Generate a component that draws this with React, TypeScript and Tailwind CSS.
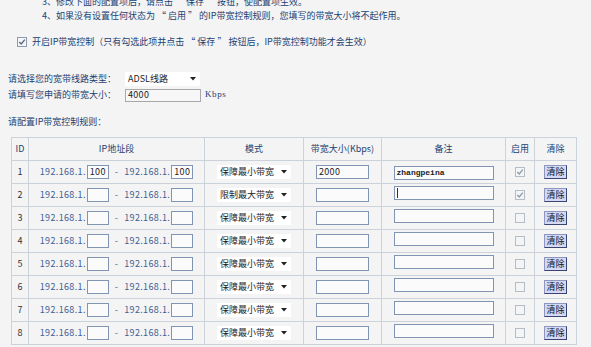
import React from "react";

type Row = {
  id: number;
  a: string;
  b: string;
  mode: string;
  bw: string;
  note: string;
  on: boolean;
  caret?: boolean;
};

const rows: Row[] = [
  { id: 1, a: "100", b: "100", mode: "保障最小带宽", bw: "2000", note: "zhangpeina", on: true },
  { id: 2, a: "", b: "", mode: "限制最大带宽", bw: "", note: "", on: true, caret: true },
  { id: 3, a: "", b: "", mode: "保障最小带宽", bw: "", note: "", on: false },
  { id: 4, a: "", b: "", mode: "保障最小带宽", bw: "", note: "", on: false },
  { id: 5, a: "", b: "", mode: "保障最小带宽", bw: "", note: "", on: false },
  { id: 6, a: "", b: "", mode: "保障最小带宽", bw: "", note: "", on: false },
  { id: 7, a: "", b: "", mode: "保障最小带宽", bw: "", note: "", on: false },
  { id: 8, a: "", b: "", mode: "保障最小带宽", bw: "", note: "", on: false },
];

function Check({ checked, dark }: { checked: boolean; dark?: boolean }) {
  return (
    <span
      className={
        "inline-flex w-[10px] h-[10px] items-center justify-center border bg-[#f3f5f7] " +
        (dark ? "border-[#8e9aab]" : "border-[#b4bcc6]")
      }
    >
      {checked && (
        <svg width="8" height="8" viewBox="0 0 8 8">
          <path
            d="M1.3 4 L3.2 6 L6.8 1.6"
            fill="none"
            stroke={dark ? "#56657c" : "#8e99a8"}
            strokeWidth="1.3"
          />
        </svg>
      )}
    </span>
  );
}

function Arrow() {
  return (
    <svg width="6" height="4" viewBox="0 0 6 4">
      <path d="M0 0 H6 L3 3.5 Z" fill="#222" />
    </svg>
  );
}

function Select({ text, w }: { text: string; w: string }) {
  return (
    <div
      className={
        "inline-flex h-[14px] items-center justify-between bg-white pl-[3px] pr-[4px] text-[#1c1c1c] " + w
      }
    >
      <span>{text}</span>
      <Arrow />
    </div>
  );
}

function Box({ value, w, mono }: { value: string; w: string; mono?: boolean }) {
  return (
    <div
      className={
        "inline-flex h-[14px] items-center border border-[#7f95b3] bg-[#fbfbfb] pl-[2px] text-[#1c1c1c] " +
        w +
        (mono ? " font-['Liberation_Mono',monospace] text-[8px] font-bold" : "")
      }
    >
      {value}
    </div>
  );
}

export default function App() {
  return (
    <div className="w-[591px] h-[347px] overflow-hidden bg-[#f4f4f4] font-['Noto_Sans_CJK_SC',sans-serif] text-[9px] text-[#223f72]">
      <div className="-mt-[5px] pl-[42px] leading-[14px]">
        <div>3、修改下面的配置项后，请点击 “ 保存 ” 按钮，使配置项生效。</div>
        <div>4、如果没有设置任何状态为 “ 启用 ” 的IP带宽控制规则，您填写的带宽大小将不起作用。</div>
      </div>

      <div className="mt-[12px] flex h-[14px] items-center pl-[17px]">
        <Check checked dark />
        <span className="ml-[5px]">开启IP带宽控制（只有勾选此项并点击 “ 保存 ” 按钮后，IP带宽控制功能才会生效）</span>
      </div>

      <div className="mt-[23px] flex h-[14px] items-center pl-[8px]">
        <span className="w-[117px]">请选择您的宽带线路类型：</span>
        <Select text="ADSL线路" w="w-[75px]" />
      </div>
      <div className="mt-[2px] flex h-[14px] items-center pl-[8px]">
        <span className="w-[117px]">请填写您申请的带宽大小：</span>
        <div className="inline-flex h-[13px] w-[76px] items-center border border-[#a9a9a9] bg-[#f7f7f7] pl-[2px] text-[#1c1c1c] tracking-[0.3px]">
          4000
        </div>
        <span className="ml-[4px] font-['Liberation_Serif',serif] text-[9px] tracking-[0.6px]">Kbps</span>
      </div>

      <div className="mt-[13px] h-[14px] pl-[8px] leading-[14px]">请配置IP带宽控制规则：</div>

      <table className="ml-[11px] mt-[8px] table-fixed border-collapse w-[565px]">
        <colgroup>
          <col className="w-[17px]" />
          <col className="w-[176px]" />
          <col className="w-[99px]" />
          <col className="w-[78px]" />
          <col className="w-[124px]" />
          <col className="w-[29px]" />
          <col className="w-[42px]" />
        </colgroup>
        <thead>
          <tr className="h-[23px]">
            <th className="border border-[#cbd2da] font-normal">ID</th>
            <th className="border border-[#cbd2da] font-normal">IP地址段</th>
            <th className="border border-[#cbd2da] font-normal">模式</th>
            <th className="border border-[#cbd2da] font-normal">带宽大小(Kbps)</th>
            <th className="border border-[#cbd2da] font-normal">备注</th>
            <th className="border border-[#cbd2da] font-normal">启用</th>
            <th className="border border-[#cbd2da] font-normal">清除</th>
          </tr>
        </thead>
        <tbody>
          {rows.map((r) => (
            <tr key={r.id} className="h-[23px]">
              <td className="border border-[#cbd2da] text-center text-[#333]">{r.id}</td>
              <td className="border border-[#cbd2da]">
                <div className="flex items-center justify-center text-[#3f5f95] tracking-[0.35px]">
                  <span>192.168.1.</span>
                  <Box value={r.a} w="w-[22px] ml-[1px]" />
                  <span className="mx-[6px]">-</span>
                  <span>192.168.1.</span>
                  <Box value={r.b} w="w-[22px] ml-[1px]" />
                </div>
              </td>
              <td className="border border-[#cbd2da]">
                <div className="flex justify-center">
                  <Select text={r.mode} w="w-[74px]" />
                </div>
              </td>
              <td className="border border-[#cbd2da]">
                <div className="flex justify-center tracking-[0.3px]">
                  <Box value={r.bw} w="w-[53px]" />
                </div>
              </td>
              <td className="border border-[#cbd2da]">
                <div className="flex justify-center">
                  <div className="relative">
                    <Box value={r.note} w="w-[100px]" mono />
                    {r.caret && (
                      <span className="absolute left-[3px] top-[2px] h-[10px] w-[1px] bg-[#333]" />
                    )}
                  </div>
                </div>
              </td>
              <td className="border border-[#cbd2da]">
                <div className="flex justify-center">
                  <Check checked={r.on} />
                </div>
              </td>
              <td className="border border-[#cbd2da]">
                <div className="flex justify-center">
                  <span className="inline-flex h-[14px] w-[23px] items-center justify-center border border-t-[#8c96c0] border-l-[#8c96c0] border-r-[#3a4470] border-b-[#3a4470] bg-[#d5d9f5] text-[#111]">
                    清除
                  </span>
                </div>
              </td>
            </tr>
          ))}
        </tbody>
      </table>
    </div>
  );
}
